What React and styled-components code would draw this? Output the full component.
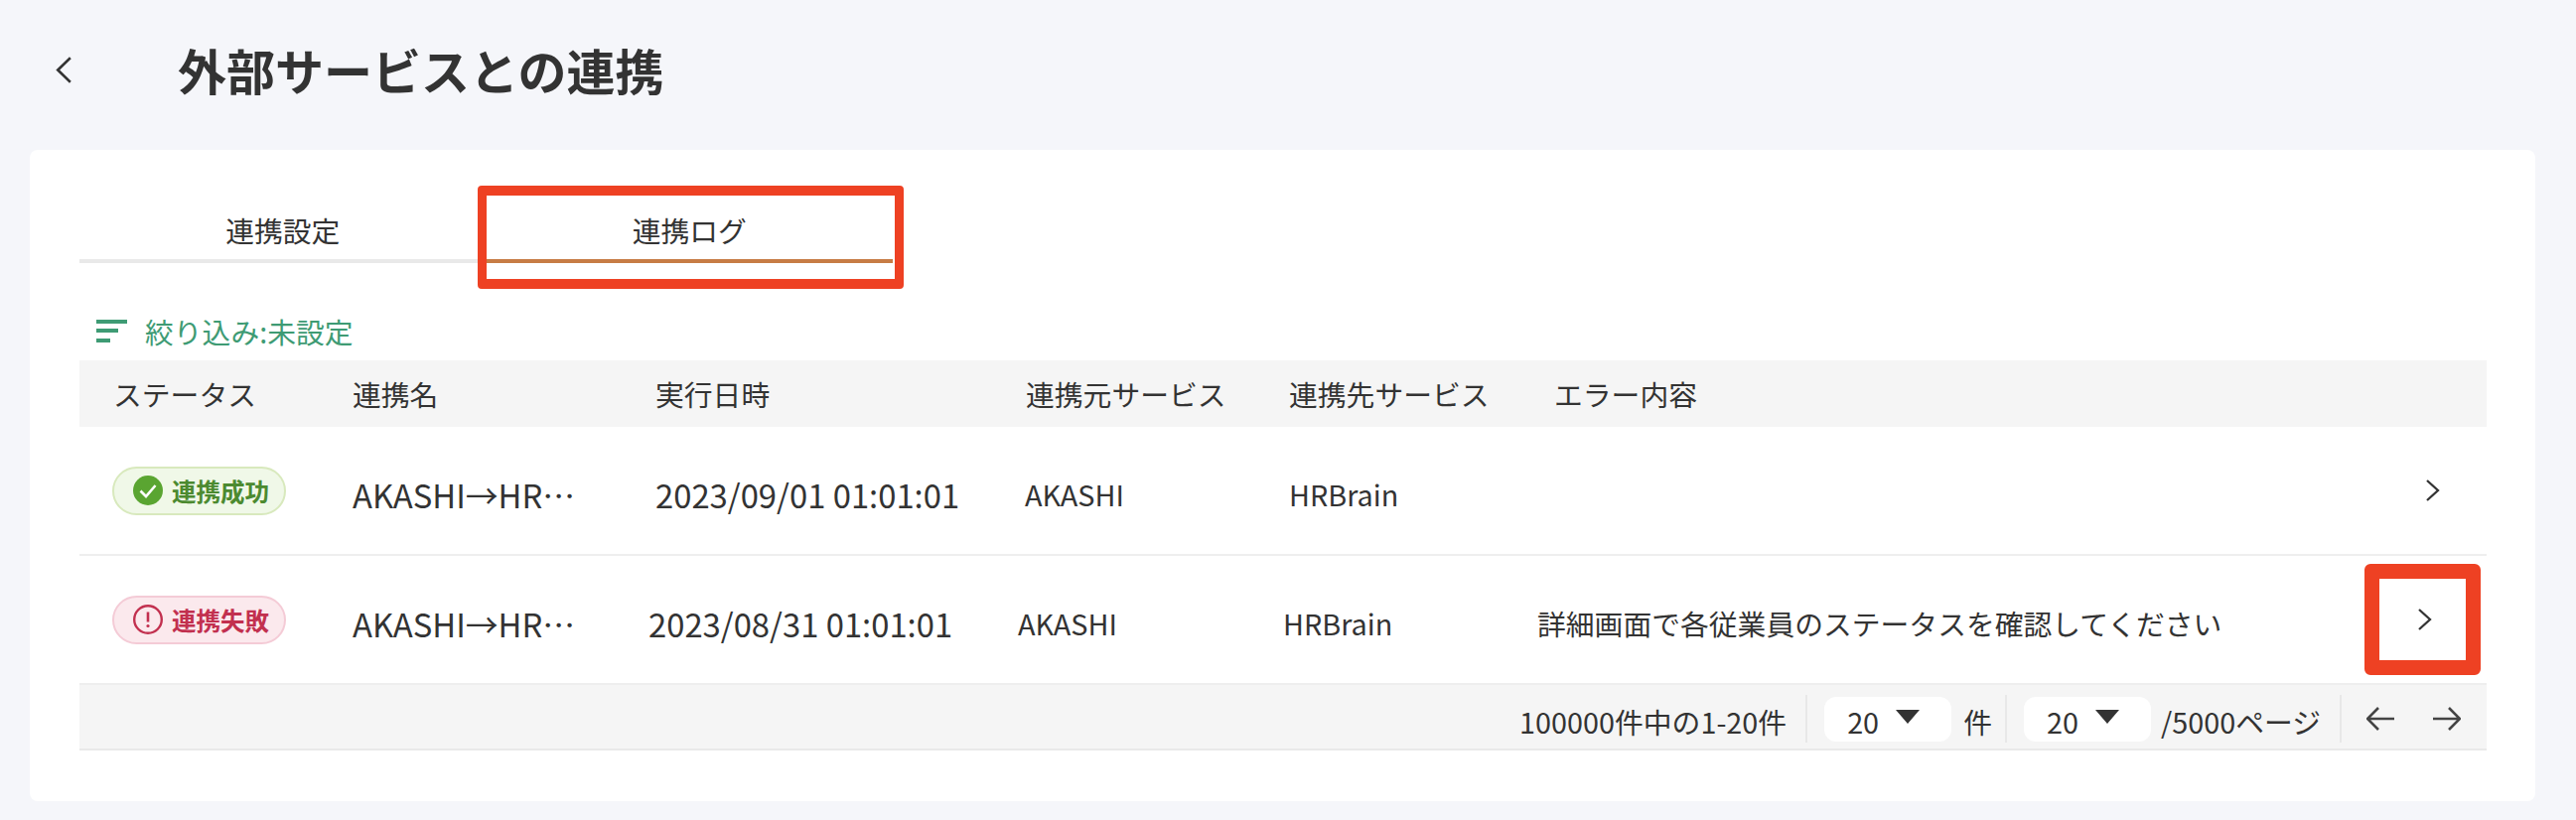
import React from 'react';
import styled, { createGlobalStyle } from 'styled-components';

const Global = createGlobalStyle`
  html, body { margin: 0; padding: 0; background: #f5f6fa; }
  body { font-family: "Noto Sans CJK JP", "Noto Sans", sans-serif; color: #333; }
`;

const Page = styled.div`
  width: 2594px;
  height: 826px;
  box-sizing: border-box;
  background: #f5f6fa;
  padding: 0 41px 19px 30px;
  display: flex;
  flex-direction: column;
  overflow: hidden;
`;

const Header = styled.header`
  height: 140px;
  margin-bottom: 11px;
  flex: none;
  display: flex;
  align-items: center;
  padding-left: 26px;
`;

const BackButton = styled.button`
  width: 16px;
  padding: 0;
  border: 0;
  background: none;
  display: flex;
  margin-right: 107px;
`;

const Title = styled.h1`
  margin: 0;
  font-size: 49px;
  line-height: 70px;
  font-weight: 700;
  color: #333;
`;

const Card = styled.main`
  flex: 1;
  background: #fff;
  border-radius: 8px;
  padding: 44px 49px 0 50px;
`;

const Tabs = styled.div`
  display: flex;
`;

const Tab = styled.div`
  position: relative;
  width: 409.5px;
  height: 70px;
  box-sizing: border-box;
  border-bottom: 4px solid ${p => (p.$active ? '#c77c45' : '#e9e9e9')};
  padding-top: 6px;
  display: flex;
  align-items: center;
  justify-content: center;
  font-size: 28.8px;
  color: #333;
`;

const TabHighlight = styled.div`
  position: absolute;
  left: -9px;
  right: -11px;
  top: -8px;
  bottom: -30px;
  border: 10px solid #ee4123;
  border-left-width: 9px;
  border-right-width: 9px;
  border-radius: 4px;
`;

const Filter = styled.div`
  height: 98px;
  box-sizing: border-box;
  padding: 38px 0 0 17px;
  display: flex;
  align-items: center;
  gap: 18px;
  font-size: 28.8px;
  color: #3e9b74;
`;

const TableHead = styled.div`
  height: 67px;
  box-sizing: border-box;
  display: flex;
  align-items: center;
  background: #f5f5f5;
  padding: 0 0 0 34px;
  font-size: 28.8px;
  color: #333;
`;

const Cell = styled.div`
  flex: none;
  width: ${p => p.$w}px;
  white-space: nowrap;
`;

const TextCell = styled(Cell)`
  padding-top: 6px;
  font-size: ${p => p.$size || 28.8}px;
`;

const Row = styled.div`
  position: relative;
  height: 130px;
  box-sizing: border-box;
  display: flex;
  align-items: center;
  border-bottom: 2px solid #eee;
  padding-left: 33px;
  color: #333;
`;

const Badge = styled.div`
  width: 175px;
  height: 49px;
  box-sizing: border-box;
  border-radius: 25px;
  display: flex;
  align-items: center;
  gap: 9px;
  padding-left: 19px;
  font-size: 24.5px;
  font-weight: 700;
  background: ${p => (p.$ok ? '#f0f8e8' : '#fbe9ed')};
  border: 2px solid ${p => (p.$ok ? '#d8e9bd' : '#f4cbd6')};
  color: ${p => (p.$ok ? '#4c8a30' : '#c2304f')};
`;

const RowArrow = styled.div`
  margin-left: auto;
  padding-right: ${p => p.$pr}px;
  display: flex;
`;

const RowHighlight = styled.div`
  position: absolute;
  right: 6px;
  top: 8px;
  width: 117px;
  height: 112px;
  box-sizing: border-box;
  border: 15px solid #ee4123;
  border-radius: 6px;
`;

const Footer = styled.div`
  height: 66px;
  box-sizing: border-box;
  background: #f5f5f5;
  border-bottom: 2px solid #e9e9e9;
  display: flex;
  align-items: center;
  justify-content: flex-end;
  padding: 4px 26px 0 0;
  font-size: 28.8px;
  color: #333;
`;

const FooterText = styled.span`
  padding-top: 4px;
`;

const FooterSep = styled.div`
  width: 2px;
  height: 48px;
  background: #e8e8e8;
  margin: 0 ${p => p.$r}px 0 ${p => p.$l}px;
`;

const Select = styled.div`
  width: 128px;
  height: 45px;
  box-sizing: border-box;
  background: #fff;
  border-radius: 12px;
  display: flex;
  align-items: center;
  gap: 17px;
  padding-left: 23px;
  margin-right: ${p => p.$mr}px;
`;

const SelectValue = styled.span`
  padding-top: 4px;
`;

const PagerButton = styled.button`
  padding: 0;
  border: 0;
  background: none;
  display: flex;
  margin-left: ${p => p.$ml || 0}px;
`;

const Chevron = ({ left, w = 14, h = 22 }) => (
  <svg width={w} height={h} viewBox="0 0 14 22" fill="none" stroke="#333" strokeWidth="2.3" preserveAspectRatio="none">
    <path d={left ? 'M13 1 L2 11 L13 21' : 'M1 1 L12 11 L1 21'} />
  </svg>
);

const FilterIcon = () => (
  <svg width="31" height="23" viewBox="0 0 31 23" fill="#3e9b74">
    <rect x="0" y="0" width="31" height="4" />
    <rect x="0" y="9" width="22" height="4" />
    <rect x="0" y="19" width="14" height="4" />
  </svg>
);

const CheckIcon = () => (
  <svg width="30" height="30" viewBox="0 0 30 30" style={{ flex: 'none' }}>
    <circle cx="15" cy="15" r="15" fill="#5aa531" />
    <path d="M7.5 15.5 L13 21 L22.5 10" fill="none" stroke="#fff" strokeWidth="2.6" />
  </svg>
);

const AlertIcon = () => (
  <svg width="30" height="30" viewBox="0 0 30 30" style={{ flex: 'none' }}>
    <circle cx="15" cy="15" r="13.8" fill="none" stroke="#c2304f" strokeWidth="2.4" />
    <path d="M15 7.5 V17.5" stroke="#c2304f" strokeWidth="2.6" />
    <circle cx="15" cy="21.5" r="1.6" fill="#c2304f" />
  </svg>
);

const Caret = () => (
  <svg width="24" height="14" viewBox="0 0 24 14" style={{ flex: 'none', marginTop: '-4px' }}>
    <path d="M0 0 H24 L12 14 Z" fill="#333" />
  </svg>
);

const ArrowIcon = ({ right }) => (
  <svg width="29" height="24" viewBox="0 0 29 24" fill="none" stroke="#444" strokeWidth="2.6">
    {right ? <path d="M1 12 H28 M17 1 L28 12 L17 23" /> : <path d="M28 12 H1 M12 1 L1 12 L12 23" />}
  </svg>
);

export default function App() {
  return (
    <Page lang="ja">
      <Global />
      <Header>
        <BackButton aria-label="戻る"><Chevron left w={16} h={27} /></BackButton>
        <Title>外部サービスとの連携</Title>
      </Header>
      <Card>
        <Tabs>
          <Tab>連携設定</Tab>
          <Tab $active>連携ログ<TabHighlight /></Tab>
        </Tabs>
        <Filter><FilterIcon />絞り込み:未設定</Filter>
        <TableHead>
          <Cell $w={241}>ステータス</Cell>
          <Cell $w={305}>連携名</Cell>
          <Cell $w={373}>実行日時</Cell>
          <Cell $w={265}>連携元サービス</Cell>
          <Cell $w={267}>連携先サービス</Cell>
          <Cell $w={300}>エラー内容</Cell>
        </TableHead>
        <Row>
          <Cell $w={242}><Badge $ok><CheckIcon />連携成功</Badge></Cell>
          <TextCell $w={305} $size={32.8}>AKASHI→HR…</TextCell>
          <TextCell $w={372} $size={32.8}>2023/09/01 01:01:01</TextCell>
          <TextCell $w={266}>AKASHI</TextCell>
          <TextCell $w={267}>HRBrain</TextCell>
          <RowArrow $pr={47}><Chevron /></RowArrow>
        </Row>
        <Row>
          <Cell $w={242}><Badge><AlertIcon />連携失敗</Badge></Cell>
          <TextCell $w={298} $size={32.8}>AKASHI→HR…</TextCell>
          <TextCell $w={372} $size={32.8}>2023/08/31 01:01:01</TextCell>
          <TextCell $w={267}>AKASHI</TextCell>
          <TextCell $w={256}>HRBrain</TextCell>
          <TextCell $w={720}>詳細画面で各従業員のステータスを確認してください</TextCell>
          <RowArrow $pr={55}><Chevron /></RowArrow>
          <RowHighlight />
        </Row>
        <Footer>
          <FooterText>100000件中の1-20件</FooterText>
          <FooterSep $l={19} $r={17} />
          <Select $mr={12}><SelectValue>20</SelectValue><Caret /></Select>
          <FooterText>件</FooterText>
          <FooterSep $l={13} $r={17} />
          <Select $mr={10}><SelectValue>20</SelectValue><Caret /></Select>
          <FooterText>/5000ページ</FooterText>
          <FooterSep $l={19} $r={25} />
          <PagerButton aria-label="前へ"><ArrowIcon /></PagerButton>
          <PagerButton aria-label="次へ" $ml={37}><ArrowIcon right /></PagerButton>
        </Footer>
      </Card>
    </Page>
  );
}
